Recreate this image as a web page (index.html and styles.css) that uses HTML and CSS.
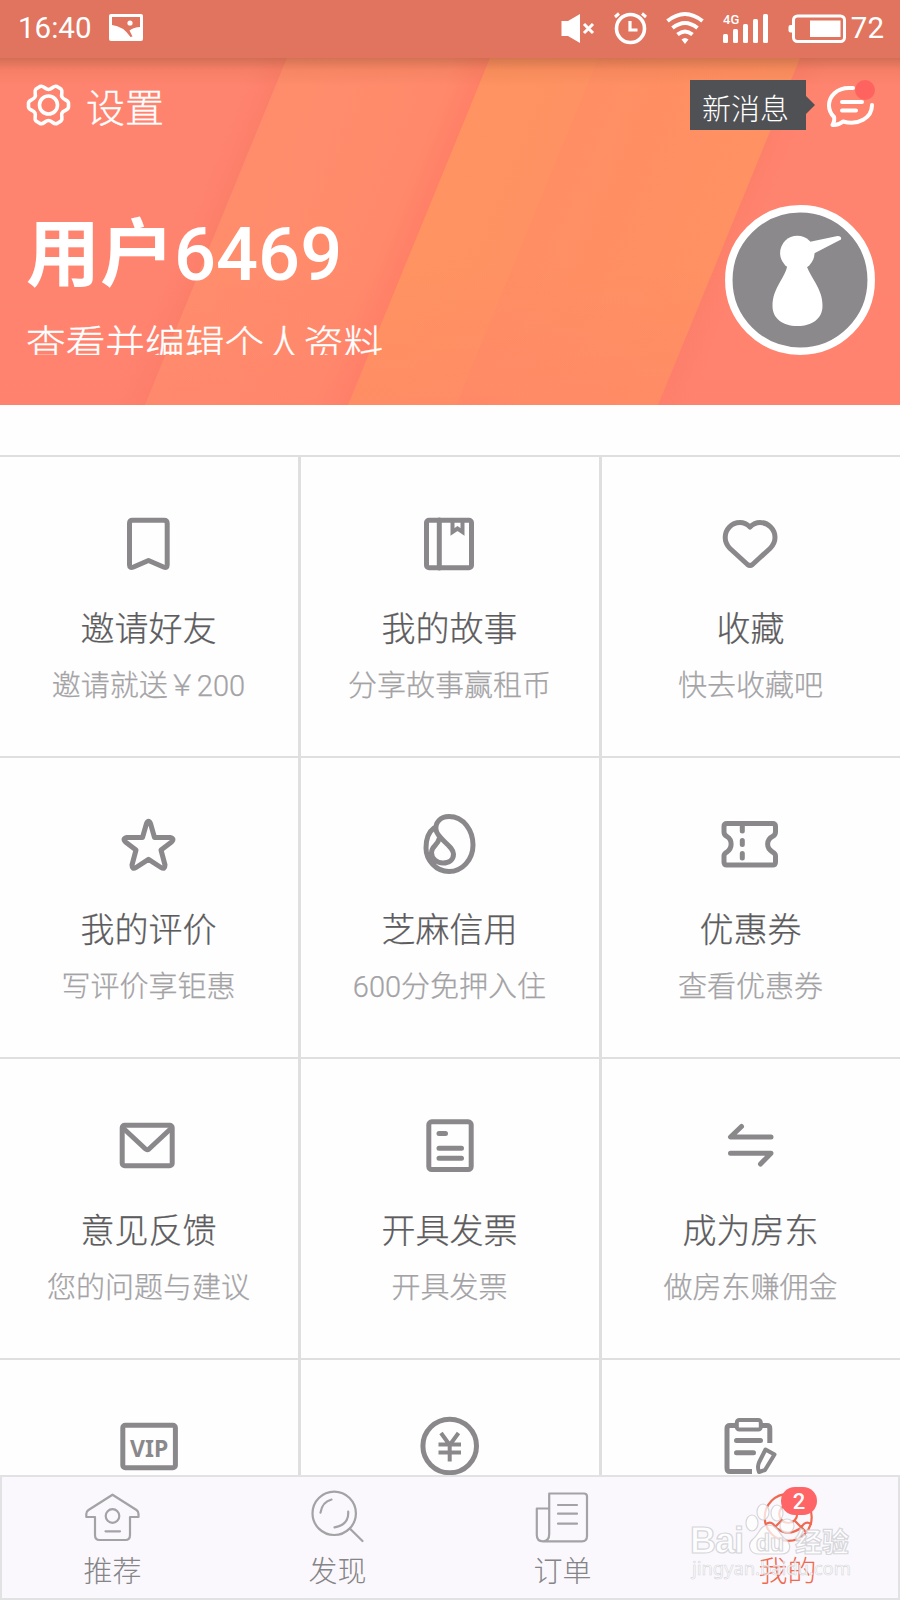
FILE: index.html
```html
<!DOCTYPE html>
<html lang="zh-CN">
<head>
  <meta charset="UTF-8" />
  <meta name="viewport" content="width=device-width, initial-scale=1.0" />
  <title>我的</title>

  <link rel="stylesheet" href="styles.css">
</head>

<body>
  <header class="header">
    <div class="status-bar">
      <div class="status-left">
        <span>16:40</span>
        <svg width="34" height="27" viewBox="0 0 34 27">
          <rect width="34" height="27" rx="2" fill="#fff"/>
          <path d="M3 3H31V13Q25 13 20.500 16.500L23.500 22.500L21.500 23Q14 12 3 11Z" fill="#e1745f"/>
          <circle cx="21" cy="9" r="2.6" fill="#fff"/>
        </svg>
      </div>
      <div class="status-right">
        <svg width="35" height="34" viewBox="0 0 35 34">
          <path d="M1.5 10H8L20 3V32L8 25H1.5Z" fill="#fff"/>
          <path d="M24 13L33 22M33 13L24 22" stroke="#fff" stroke-width="3"/>
        </svg>
        <svg width="33" height="34" viewBox="0 0 33 34" fill="none" stroke="#fff">
          <circle cx="16.5" cy="17.5" r="14" stroke-width="3.6"/>
          <path d="M16 10V19H23.5" stroke-width="3.2"/>
          <path d="M1 6L5 2.5M32 6L28 2.5" stroke-width="3"/>
        </svg>
        <svg width="38" height="34" viewBox="0 0 38 34" fill="none" stroke="#fff" stroke-width="4">
          <path d="M1.500 10Q19 -4 36.500 10M6.500 17Q19 7 31.500 17M11.500 23.500Q19 17.500 26.500 23.500"/>
          <path d="M15.500 28.500Q19 25.500 22.500 28.500L19 33Z" fill="#fff" stroke="none"/>
        </svg>
        <svg width="46" height="34" viewBox="0 0 46 34" fill="#fff">
          <text x="0" y="13" class="net-label">4G</text>
          <rect x="0" y="23" width="5" height="9" rx="1.500"/>
          <rect x="10" y="18" width="5" height="14" rx="1.500"/>
          <rect x="20" y="13" width="5" height="19" rx="1.500"/>
          <rect x="30" y="8" width="5" height="24" rx="1.500"/>
          <rect x="40" y="3" width="5" height="29" rx="1.500"/>
        </svg>
        <div class="battery">
          <svg width="58" height="34" viewBox="0 0 58 34">
            <rect x="5.500" y="5" width="51" height="25.500" rx="4" fill="none" stroke="#fff" stroke-width="3"/>
            <path d="M4 14H2.500Q.5 14 .5 16V19.500Q.5 21.500 2.500 21.500H4Z" fill="#fff"/>
            <rect x="22" y="9.500" width="30.500" height="16.500" fill="#fff"/>
          </svg>
          <span>72</span>
        </div>
      </div>
    </div>

    <div class="toolbar">
      <a class="settings">
        <svg width="46" height="46" viewBox="0 0 46 46" fill="none" stroke="#fff" stroke-width="3.600" stroke-linejoin="round">
          <circle cx="22.500" cy="23" r="9"/>
          <path d="M14 4.500C17.500 3 19 7.500 22.500 7.500S27.500 3 31 4.500L35 7C37.500 9.500 34.500 12 36 15S42.500 18 42.500 21V25C42.500 28.500 37.500 28 36 31S37.500 36.500 35 39L31 41.500C27.500 43 26 38.500 22.500 38.500S17.500 43 14 41.500L10 39C7.500 36.500 10.500 34 9 31S2.500 28 2.500 25V21C2.500 18 7.500 18 9 15S7.500 9.500 10 7Z"/>
        </svg>
        <span>设置</span>
      </a>
      <div class="messages">
        <div class="tooltip">新消息</div>
        <div class="message-icon">
          <svg width="50" height="50" viewBox="0 0 50 50" fill="none" stroke="#fff" stroke-width="4" stroke-linecap="round" stroke-linejoin="round">
            <path d="M28 8H24C12 8 4 16 4 25.500C4 31 6 34 9 37C10 40 9 42 7.500 45C12 45.500 15 44 18 41.500C33 46 47 38 47 25"/>
            <path d="M17 22H37M17 30.500H31"/>
          </svg>
          <i class="dot"></i>
        </div>
      </div>
    </div>

    <div class="profile">
      <div class="profile-text">
        <h1>用户<span>6469</span></h1>
        <p>查看并编辑个人资料</p>
      </div>
      <div class="avatar">
        <svg width="150" height="150" viewBox="0 0 150 150">
          <circle cx="75" cy="75" r="71.200" fill="#8b898c" stroke="#fff" stroke-width="7.500"/>
          <g fill="#fff">
            <circle cx="72.300" cy="48" r="17.200"/>
            <path d="M84 37L112.500 31Q117 31 116 34.500L88 49Z"/>
            <path d="M62 62H82Q84 67 90 77C95 86 97.500 92 97.500 101C97.500 113 88 121 72.500 121S47.500 113 47.500 101C47.500 92 50 86 55 77Q61 67 62 62Z"/>
          </g>
        </svg>
      </div>
    </div>
  </header>

  <main class="menu-grid">
    <a class="menu-item">
      <svg class="icon" viewBox="0 0 60 60">
        <path d="M13.500 6.200H45Q48.200 6.200 48.200 9.500V51Q48.200 54.500 44.500 53L29.500 46.500L14.500 53Q10.500 54.500 10.500 51V9.500Q10.500 6.200 13.500 6.200Z"/>
      </svg>
      <strong>邀请好友</strong>
      <span>邀请就送￥200</span>
    </a>
    <a class="menu-item">
      <svg class="icon" viewBox="0 0 60 60">
        <rect x="6.500" y="6.200" width="45" height="47.600" rx="2.500"/>
        <path d="M19.300 6V54"/>
        <path d="M32.500 6V18L37.500 14.500L42.500 18V6" stroke-width="4" stroke-linejoin="miter"/>
      </svg>
      <strong>我的故事</strong>
      <span>分享故事赢租币</span>
    </a>
    <a class="menu-item">
      <svg class="icon" viewBox="0 0 60 60">
        <path d="M29 13C26 10 22.500 8.500 19 8.500C10.500 8.500 4.200 15.500 4.200 23.500C4.200 28 6 31.500 9 34.500L26.500 50.500Q29 52.500 31.500 50.500L49 34.500C52 31.500 54 28 54 23.500C54 15.500 47.500 8.500 39 8.500C35.500 8.500 32 10 29 13Z"/>
      </svg>
      <strong>收藏</strong>
      <span>快去收藏吧</span>
    </a>
    <a class="menu-item">
      <svg class="icon" viewBox="0 0 60 60">
        <path d="M27.500 8.500Q29.500 4 31.500 8.500L35.500 22.500H51Q56 23.500 52.500 27L42 35L46 50Q46 55 42 52.500L29.500 44.300L17 52.500Q13 55 13 50L17 35L6.500 27Q3 23.500 8 22.500H23.500Z"/>
      </svg>
      <strong>我的评价</strong>
      <span>写评价享钜惠</span>
    </a>
    <a class="menu-item">
      <svg class="icon" viewBox="0 0 60 60">
        <path d="M14 13C8.500 17 6 25 6 33C6 45 16 56.500 29 56.500C42 56.500 53 45 53 30C53 16 44 1.500 29 1.500C20 1.500 15 8 16 15C17.500 24 33.500 31 33.500 39C33.500 45 29 48 23 48C17 48 11.500 44 11.500 37.500C11.500 31 18 30 19 24"/>
      </svg>
      <strong>芝麻信用</strong>
      <span>600分免押入住</span>
    </a>
    <a class="menu-item">
      <svg class="icon" viewBox="0 0 60 60">
        <path d="M6 8.500H51.500Q54.500 8.500 54.500 11.500V17Q54.500 20 51.500 21.500C45 25 45 33 51.500 37Q54.500 38.500 54.500 41V47Q54.500 50 51.500 50H6Q3 50 3 47V41Q3 38.500 6 37C11.500 33 11.500 25 6 21.500Q3 20 3 17V11.500Q3 8.500 6 8.500Z"/>
        <path d="M21.300 10V16M21.300 25.500V29.500M21.300 38.500V43"/>
      </svg>
      <strong>优惠券</strong>
      <span>查看优惠券</span>
    </a>
    <a class="menu-item">
      <svg class="icon" viewBox="0 0 60 60">
        <rect x="3.200" y="9.200" width="50" height="40.600" rx="2.500"/>
        <path d="M4 12L26.500 33Q28.200 34.500 30 33L52.500 12"/>
      </svg>
      <strong>意见反馈</strong>
      <span>您的问题与建议</span>
    </a>
    <a class="menu-item">
      <svg class="icon" viewBox="0 0 60 60">
        <rect x="8.800" y="5.800" width="42.400" height="47.800" rx="3"/>
        <path d="M19 17.500H25.500M19 32.300H41.500M19 42.300H41.500"/>
      </svg>
      <strong>开具发票</strong>
      <span>开具发票</span>
    </a>
    <a class="menu-item">
      <svg class="icon" viewBox="0 0 60 60">
        <path d="M20.500 10.500L9.500 21H50M9.500 37.300H50L39.500 48"/>
      </svg>
      <strong>成为房东</strong>
      <span>做房东赚佣金</span>
    </a>
    <a class="menu-item">
      <svg class="icon" viewBox="0 0 60 60">
        <rect x="3.800" y="8.200" width="52.600" height="42.600" rx="2.500"/>
        <text class="vip" x="30.200" y="39.500">VIP</text>
      </svg>
    </a>
    <a class="menu-item">
      <svg class="icon" viewBox="0 0 60 60">
        <circle cx="29.700" cy="29" r="26.800"/>
        <g stroke-width="4" stroke-linecap="butt">
          <path d="M21 16L29.700 28L38.500 16M29.700 27V44.500M18.500 27.500H41M18.500 35.500H41"/>
        </g>
      </svg>
    </a>
    <a class="menu-item">
      <svg class="icon" viewBox="0 0 60 60">
        <path d="M14 8.500H9Q6 8.500 6 11.500V51Q6 54.500 9 54.500H31M41 8.500H46Q48.800 8.500 48.800 11.500V26" stroke-linecap="butt"/>
        <rect x="15.800" y="3" width="24" height="9.500" rx="2.500" stroke-width="4"/>
        <path d="M15.500 23.500H39.500M15.500 35.800H32.500"/>
        <path d="M44.500 32.500L53.500 37.500L44 53L38 55Q36 50 38 45.500Z" stroke-width="4"/>
      </svg>
    </a>
  </main>

  <nav class="tab-bar">
    <a class="tab">
      <svg viewBox="0 0 60 60">
        <path d="M29.500 9.700L53.500 25Q55.500 26.500 55.500 29V32H47V50Q47 55 42.500 55H16.500Q12 55 12 50V32H3.300V29Q3.300 26.500 5.500 25Z"/>
        <circle cx="29.500" cy="31" r="6.800"/>
        <path d="M22.500 46.300H37"/>
      </svg>
      <span>推荐</span>
    </a>
    <a class="tab">
      <svg viewBox="0 0 60 60">
        <circle cx="26.200" cy="28.300" r="21.700"/>
        <path d="M41.800 43.500L54.500 56M12.500 27.700Q14 17 23.500 14.500M40.200 26.700Q41 40 26.500 42.300"/>
      </svg>
      <span>发现</span>
    </a>
    <a class="tab">
      <svg viewBox="0 0 60 60">
        <path d="M16.200 47V8.500H51Q54 8.500 54 11.500V51Q54 56.300 49 56.300H10Q3.800 56.300 3.800 50V23.500H16.200V49Q16.200 56 10 56.300M25 20H44M25 28.700H44M25 38.700H44"/>
      </svg>
      <span>订单</span>
    </a>
    <a class="tab active">
      <svg viewBox="0 0 60 60">
        <circle cx="30.200" cy="32.300" r="23.500"/>
        <circle cx="30.200" cy="29" r="9"/>
        <path d="M8 39Q14 35 18 43Q30 52 43 43Q47 35 53 39M23 36L17 42M37 36L48 47"/>
      </svg>
      <span>我的</span>
      <b class="badge">2</b>
    </a>
  </nav>

  <div class="watermark">
    <svg width="170" height="80" viewBox="0 0 170 80">
      <g class="paw">
        <ellipse cx="64" cy="22" rx="6" ry="8"/>
        <ellipse cx="75" cy="11" rx="6" ry="8"/>
        <ellipse cx="89" cy="12" rx="6" ry="8"/>
        <ellipse cx="99" cy="25" rx="7" ry="7"/>
        <path d="M80 24C71 25 71 34 65 38C59 43 61 53 71 53H93C104 53 104 42 96 37C91 33 90 24 80 24Z"/>
      </g>
      <text class="mark-main" x="2" y="52" textLength="54">Bai</text>
      <text class="mark-du" x="68" y="50">du</text>
      <text class="mark-cn" x="107" y="51">经验</text>
      <text class="mark-url" x="4" y="74" textLength="159">jingyan.baidu.com</text>
    </svg>
  </div>
</body>
</html>
```

FILE: styles.css
```css
:root {
  --coral: #ff846f;
  --line: #dfdfe0;
  --icon: #8a888b;
  --active: #f0694f;
}

* {
  box-sizing: border-box;
}

body {
  margin: 0;
  height: 1600px;
  position: relative;
  display: flex;
  flex-direction: column;
  overflow: hidden;
  background: #fefefe;
  font-family: "Noto Sans CJK SC", sans-serif;
  font-weight: 300;
}

svg {
  display: block;
  flex-shrink: 0;
}

/* Header */
.header {
  height: 405px;
  flex-shrink: 0;
  color: #fff;
  background:
    linear-gradient(rgba(150, 80, 50, 0.42), rgba(190, 90, 50, 0.14) 12px, transparent 28px) 0 58px / 100% 30px no-repeat,
    linear-gradient(transparent 60%, rgba(255, 125, 110, 0.28)) 0 58px / 100% 347px no-repeat,
    linear-gradient(112.25deg,
      var(--coral) 0, var(--coral) 235px, #fc7f6a 265px,
      #ff8d6c 266px, #ff8a6b 420px, #ff8067 453px,
      #ff9361 454px, #ff9262 553px,
      #ff8e64 554px, #ff9162 740px,
      #fd806b 741px, var(--coral) 770px) 0 58px / 100% 347px no-repeat;
}

.status-bar {
  height: 58px;
  padding: 0 16px 3px 18px;
  display: flex;
  align-items: center;
  justify-content: space-between;
  background: #e1745f;
  font-family: Roboto, sans-serif;
  font-size: 29.5px;
  font-weight: 400;
}

.status-left {
  display: flex;
  align-items: center;
  gap: 18px;
}

.status-right {
  display: flex;
  align-items: center;
  gap: 19px;
}

.net-label {
  font: 500 13px Roboto, sans-serif;
}

.battery {
  display: flex;
  align-items: center;
  gap: 5px;
}

.toolbar {
  height: 50px;
  margin-top: 22px;
  padding: 0 25px 0 26px;
  display: flex;
  align-items: center;
  justify-content: space-between;
}

.settings {
  display: flex;
  align-items: center;
  gap: 14px;
  font-size: 39px;
  line-height: 50px;
  -webkit-text-stroke: 0.3px;
}

.messages {
  display: flex;
  align-items: center;
  gap: 19px;
}

.tooltip {
  position: relative;
  width: 116px;
  height: 50px;
  padding-left: 12px;
  background: #505154;
  font-size: 29px;
  line-height: 54px;
}

.tooltip::after {
  content: "";
  position: absolute;
  left: 116px;
  top: 16px;
  border: 9px solid transparent;
  border-left-color: #505154;
  border-right: 0;
}

.message-icon {
  position: relative;
}

.dot {
  position: absolute;
  top: 0;
  right: 0;
  width: 20px;
  height: 20px;
  border-radius: 50%;
  background: #ff6360;
}

.profile {
  height: 150px;
  margin-top: 75px;
  padding: 0 25px 0 26px;
  display: flex;
  justify-content: space-between;
}

.profile-text {
  height: 150px;
  overflow: hidden;
}

.profile-text h1 {
  margin: 0;
  font-family: Roboto, "Noto Sans CJK SC", sans-serif;
  font-size: 74px;
  font-weight: 700;
  line-height: 100px;
}

.profile-text h1 span {
  font-weight: 500;
}

.profile-text p {
  margin: 13px 0 0;
  font-size: 39.7px;
  line-height: 48px;
  -webkit-text-stroke: 0.3px;
}

/* Menu */
.menu-grid {
  height: 1145px;
  margin-top: 50px;
  border-top: 2px solid var(--line);
  display: grid;
  grid-template-columns: repeat(3, 1fr);
  grid-auto-rows: 299px;
  gap: 2px 3px;
  flex-shrink: 0;
  overflow: hidden;
  background: var(--line);
}

.menu-item {
  padding-top: 57px;
  display: flex;
  flex-direction: column;
  align-items: center;
  background: #fefefe;
  font-family: Roboto, "Noto Sans CJK SC", sans-serif;
}

.icon {
  width: 60px;
  height: 60px;
  overflow: visible;
  fill: none;
  stroke: var(--icon);
  stroke-width: 5;
  stroke-linecap: round;
  stroke-linejoin: round;
}

.vip {
  font: 700 23px "Noto Sans", sans-serif;
  fill: var(--icon);
  stroke: none;
  text-anchor: middle;
}

.menu-item strong {
  margin-top: 35px;
  padding-right: 1px;
  color: #5c5b5d;
  font-size: 34px;
  font-weight: 300;
  line-height: 40px;
  -webkit-text-stroke: 0.25px;
}

.menu-item span {
  margin-top: 19px;
  padding-right: 1px;
  color: #a3a2a5;
  font-size: 29px;
  line-height: 36px;
  -webkit-text-stroke: 0.25px;
}

/* Bottom tabs */
.tab-bar {
  position: absolute;
  left: 0;
  right: 0;
  bottom: 0;
  height: 125px;
  display: grid;
  grid-template-columns: repeat(4, 1fr);
  background: #faf8fc;
  box-shadow: inset 0 0 0 2px #e2e1e4;
}

.tab {
  position: relative;
  padding-top: 10px;
  display: flex;
  flex-direction: column;
  align-items: center;
  color: #858487;
  font-size: 29px;
  line-height: 36px;
}

.tab svg {
  width: 60px;
  height: 60px;
  fill: none;
  stroke: #a3a2a5;
  stroke-width: 2.2;
  stroke-linecap: round;
  stroke-linejoin: round;
}

.tab span {
  margin-top: 6px;
}

.tab.active {
  color: var(--active);
}

.tab.active svg {
  stroke: var(--active);
}

.badge {
  position: absolute;
  top: 12px;
  left: 106px;
  width: 36px;
  height: 28px;
  border-radius: 14px;
  background: #ff6467;
  color: #fff;
  font-family: Roboto, sans-serif;
  font-size: 22px;
  font-weight: 500;
  line-height: 30px;
  text-align: center;
}

/* Site mark over the tabs */
.watermark {
  position: absolute;
  left: 688px;
  top: 1501px;
}

.paw,
.watermark text {
  fill: rgba(255, 255, 255, 0.75);
  stroke: rgba(205, 205, 210, 0.8);
  stroke-width: 1.2;
}

.mark-main {
  font: 700 36px "Liberation Sans", sans-serif;
}

.mark-du {
  font: 700 23px "Liberation Sans", sans-serif;
}

.mark-cn {
  font: 700 27px "Noto Sans CJK SC", sans-serif;
}

.watermark .mark-url {
  font: 400 18.5px "Noto Sans", sans-serif;
  stroke-width: 0.6;
}
```
